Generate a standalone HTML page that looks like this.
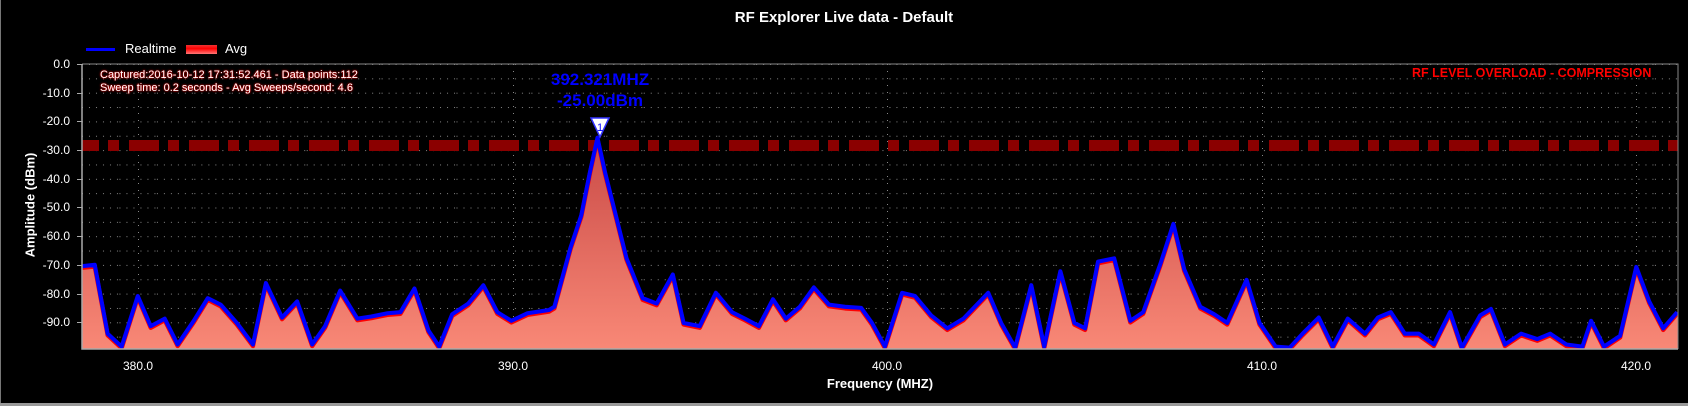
<!DOCTYPE html>
<html><head><meta charset="utf-8"><style>
html,body{margin:0;padding:0;background:#000;}
body{width:1688px;height:406px;position:relative;overflow:hidden;font-family:"Liberation Sans",sans-serif;color:#fff;}
.t{position:absolute;white-space:nowrap;}
.yl{position:absolute;right:1618px;font-size:12px;color:#fff;transform:translateY(-50%);}
.xl{position:absolute;top:359px;font-size:12px;color:#fff;transform:translateX(-50%);}
</style></head><body>
<div style="position:absolute;left:0;top:0;width:1px;height:406px;background:#777"></div>
<div style="position:absolute;left:0;top:403px;width:1688px;height:3px;background:#999"></div>
<div class="t" style="left:0;width:1688px;top:9px;text-align:center;font-size:15px;font-weight:bold;">RF Explorer Live data - Default</div>
<div style="position:absolute;left:86px;top:48px;width:29px;height:3px;background:#00f"></div>
<div class="t" style="left:125px;top:41px;font-size:13px;">Realtime</div>
<div style="position:absolute;left:186px;top:45px;width:31px;height:9px;background:linear-gradient(#e33,#f00 40%,#f77)"></div>
<div class="t" style="left:225px;top:41px;font-size:13px;">Avg</div>
<div class="yl" style="top:64px">0.0</div>
<div class="yl" style="top:93px">-10.0</div>
<div class="yl" style="top:121px">-20.0</div>
<div class="yl" style="top:150px">-30.0</div>
<div class="yl" style="top:179px">-40.0</div>
<div class="yl" style="top:207px">-50.0</div>
<div class="yl" style="top:236px">-60.0</div>
<div class="yl" style="top:265px">-70.0</div>
<div class="yl" style="top:294px">-80.0</div>
<div class="yl" style="top:322px">-90.0</div>
<div class="xl" style="left:138px">380.0</div>
<div class="xl" style="left:513px">390.0</div>
<div class="xl" style="left:887px">400.0</div>
<div class="xl" style="left:1262px">410.0</div>
<div class="xl" style="left:1636px">420.0</div>
<div class="t" style="left:0;width:1760px;top:376px;text-align:center;font-size:13px;font-weight:bold;">Frequency (MHZ)</div>
<div class="t" style="left:30px;top:205px;font-size:13px;font-weight:bold;transform:translate(-50%,-50%) rotate(-90deg);">Amplitude (dBm)</div>
<svg style="position:absolute;left:0;top:0" width="1688" height="406">
<defs>
<pattern id="g" x="82" y="64" width="37.45" height="14.35" patternUnits="userSpaceOnUse">
<line x1="0" y1="0.5" x2="37.45" y2="0.5" stroke="#888" stroke-width="1" stroke-dasharray="1 6"/>
</pattern>
<pattern id="d" x="69" y="0" width="60" height="20" patternUnits="userSpaceOnUse">
<rect x="0" y="0" width="30" height="20" fill="#8b0000"/><rect x="39" y="0" width="11" height="20" fill="#8b0000"/>
</pattern>
<linearGradient id="f" x1="0" y1="0" x2="0" y2="1"><stop offset="0" stop-color="#c94a46"/><stop offset="1" stop-color="#fa8a78"/></linearGradient>
<clipPath id="c"><rect x="76.2" y="59.45" width="1482.6" height="264.7"/></clipPath>
</defs>
<rect x="82" y="64" width="1596" height="285" fill="url(#g)"/>
<g stroke="#888" stroke-dasharray="1 6">
<line x1="138.5" y1="64" x2="138.5" y2="349"/><line x1="513.5" y1="64" x2="513.5" y2="349"/><line x1="887.5" y1="64" x2="887.5" y2="349"/><line x1="1262.5" y1="64" x2="1262.5" y2="349"/><line x1="1636.5" y1="64" x2="1636.5" y2="349"/>
</g>
<g stroke="#aaa"><line x1="77" y1="64.5" x2="82" y2="64.5"/><line x1="77" y1="93.5" x2="82" y2="93.5"/><line x1="77" y1="121.5" x2="82" y2="121.5"/><line x1="77" y1="150.5" x2="82" y2="150.5"/><line x1="77" y1="179.5" x2="82" y2="179.5"/><line x1="77" y1="207.5" x2="82" y2="207.5"/><line x1="77" y1="236.5" x2="82" y2="236.5"/><line x1="77" y1="265.5" x2="82" y2="265.5"/><line x1="77" y1="294.5" x2="82" y2="294.5"/><line x1="77" y1="322.5" x2="82" y2="322.5"/></g>
<rect x="82" y="140" width="1596" height="11" fill="url(#d)"/>
<g clip-path="url(#c)" transform="scale(1.0765)">
<path id="p" d="M70,248 L88,246 L100,310 L113,322 L128,275 L140,303 L153,296 L165,320 L180,298 L193,277 L205,283 L220,300 L235,320 L247,263 L262,295 L276,280 L290,320 L302,303 L316,270 L332,296 L345,294 L360,291 L372,290 L385,268 L398,307 L408,322 L420,292 L435,282 L449,265 L462,290 L475,298 L490,291 L510,288 L515,285 L530,230 L540,200 L548,160 L555,128 L562,160 L572,200 L582,240 L597,277 L610,282 L625,255 L635,300 L650,303 L665,272 L680,290 L692,296 L705,303 L718,278 L730,296 L743,285 L756,267 L770,283 L785,285 L800,286 L810,300 L822,322 L838,272 L850,275 L865,293 L880,305 L895,296 L918,272 L930,300 L943,323 L958,265 L970,322 L985,252 L998,300 L1008,305 L1020,243 L1035,240 L1050,298 L1062,290 L1078,245 L1090,208 L1100,250 L1115,285 L1128,292 L1140,300 L1158,260 L1170,300 L1185,322 L1198,323 L1210,310 L1225,295 L1238,322 L1252,296 L1268,310 L1280,295 L1292,290 L1305,310 L1318,310 L1332,320 L1347,290 L1358,323 L1375,293 L1385,287 L1398,320 L1413,310 L1428,315 L1440,310 L1455,320 L1470,322 L1478,298 L1490,322 L1505,312 L1520,248 L1532,280 L1545,305 L1558,290" fill="none"/>
<path d="M70,248 L88,246 L100,310 L113,322 L128,275 L140,303 L153,296 L165,320 L180,298 L193,277 L205,283 L220,300 L235,320 L247,263 L262,295 L276,280 L290,320 L302,303 L316,270 L332,296 L345,294 L360,291 L372,290 L385,268 L398,307 L408,322 L420,292 L435,282 L449,265 L462,290 L475,298 L490,291 L510,288 L515,285 L530,230 L540,200 L548,160 L555,128 L562,160 L572,200 L582,240 L597,277 L610,282 L625,255 L635,300 L650,303 L665,272 L680,290 L692,296 L705,303 L718,278 L730,296 L743,285 L756,267 L770,283 L785,285 L800,286 L810,300 L822,322 L838,272 L850,275 L865,293 L880,305 L895,296 L918,272 L930,300 L943,323 L958,265 L970,322 L985,252 L998,300 L1008,305 L1020,243 L1035,240 L1050,298 L1062,290 L1078,245 L1090,208 L1100,250 L1115,285 L1128,292 L1140,300 L1158,260 L1170,300 L1185,322 L1198,323 L1210,310 L1225,295 L1238,322 L1252,296 L1268,310 L1280,295 L1292,290 L1305,310 L1318,310 L1332,320 L1347,290 L1358,323 L1375,293 L1385,287 L1398,320 L1413,310 L1428,315 L1440,310 L1455,320 L1470,322 L1478,298 L1490,322 L1505,312 L1520,248 L1532,280 L1545,305 L1558,290 L1570,330 L60,330 Z" fill="url(#f)"/>
<use href="#p" stroke="#f00" stroke-width="4" stroke-linejoin="round" transform="translate(0,1.5)"/>
<use href="#p" stroke="#00f" stroke-width="3.8" stroke-linejoin="round"/>
</g>
<polyline points="82,64 1678,64 1678,349" fill="none" stroke="#888" stroke-width="1"/>
<polyline points="82,64 82,349 1678,349" fill="none" stroke="#aaa" stroke-width="1.5"/>
<polygon points="591,118 609,118 600,137" fill="#fff" stroke="#33f" stroke-width="1.5"/>
<text x="600" y="131" font-family="Liberation Sans" font-size="11" fill="#00f" text-anchor="middle">1</text>
</svg>
<div class="t" style="left:100px;top:69px;font-size:11px;line-height:13px;text-shadow:0 0 2px #f00,0 0 1px #f00;">Captured:2016-10-12 17:31:52.461 - Data points:112<br>Sweep time: 0.2 seconds - Avg Sweeps/second: 4.6</div>
<div class="t" style="left:500px;width:200px;top:69px;text-align:center;font-size:17px;font-weight:bold;color:#00f;line-height:21px;">392.321MHZ<br>-25.00dBm</div>
<div class="t" style="left:1412px;top:66px;font-size:12.5px;font-weight:bold;color:#f00;">RF LEVEL OVERLOAD - COMPRESSION</div>
</body></html>
